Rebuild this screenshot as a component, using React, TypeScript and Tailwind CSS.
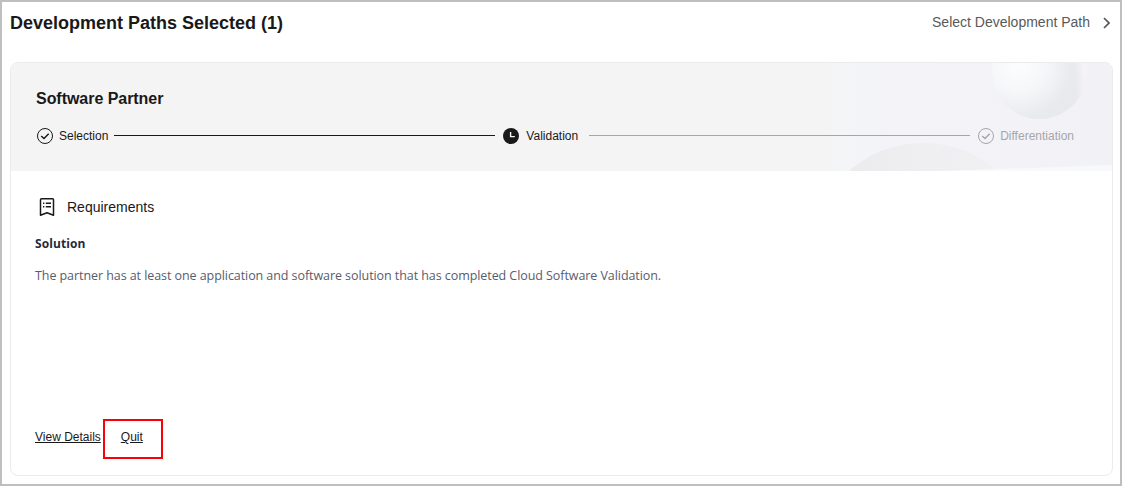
import React from 'react';

interface StepProps {
    label: string;
    status: 'done' | 'current' | 'pending';
}

const StepIcon: React.FC<{ status: StepProps['status'] }> = ({ status }) => {
    if (status === 'current') {
        return (
            <svg className="w-4 h-4 mr-px shrink-0" viewBox="0 0 16 16" fill="none">
                <circle cx="8" cy="8" r="8" fill="#191919" />
                <path d="M7.6 4v4.6h4.2" stroke="#f4f4f4" strokeWidth="1.4" />
            </svg>
        );
    }
    return (
        <svg className="w-4 h-4 shrink-0" viewBox="0 0 16 16" fill="none" stroke="currentColor" strokeWidth="1">
            <circle cx="8" cy="8" r="7.5" />
            <path d="M4.2 7.9l2.8 2.7 4.7-4.9" strokeWidth="1.4" />
        </svg>
    );
};

const Step: React.FC<StepProps> = ({ label, status }) => (
    <div className={`flex items-center gap-[6px] text-xs ${status === 'pending' ? 'text-[#a6a6a9]' : 'text-[#191919]'}`}>
        <StepIcon status={status} />
        <span className="whitespace-nowrap">{label}</span>
    </div>
);

const HeaderArt: React.FC = () => (
    <svg className="absolute right-0 top-0 w-[300px] h-[108px]" viewBox="0 0 300 108">
        <defs>
            <linearGradient id="wash" x1="0" x2="1" y1="0" y2="0">
                <stop offset="0" stopColor="#f4f4f4" />
                <stop offset="0.1" stopColor="#f4f5f7" />
                <stop offset="0.3" stopColor="#f3f3f8" />
                <stop offset="1" stopColor="#f2f1f6" />
            </linearGradient>
            <radialGradient id="ball" gradientUnits="userSpaceOnUse" cx="206" cy="2" r="66">
                <stop offset="0" stopColor="#fcfdfe" />
                <stop offset="0.4" stopColor="#f6f7f9" />
                <stop offset="0.8" stopColor="#e9eaed" />
                <stop offset="1" stopColor="#e8e9ed" />
            </radialGradient>
            <linearGradient id="rim" x1="0" x2="1" y1="0.5" y2="0.45">
                <stop offset="0.86" stopColor="#f8f5f7" stopOpacity="0" />
                <stop offset="1" stopColor="#f8f5f7" />
            </linearGradient>
            <linearGradient id="dome" x1="0" x2="1" y1="0" y2="0">
                <stop offset="0.15" stopColor="#ebebed" />
                <stop offset="0.5" stopColor="#efeff1" />
                <stop offset="0.85" stopColor="#f0f0f2" />
            </linearGradient>
        </defs>
        <rect width="300" height="108" fill="url(#wash)" />
        <circle cx="111" cy="192" r="112" fill="url(#dome)" />
        <path d="M130 108L300 102v6z" fill="#f8f9fc" />
        <circle cx="227.5" cy="8.5" r="47.5" fill="url(#ball)" />
        <circle cx="227.5" cy="8.5" r="47.5" fill="url(#rim)" />
    </svg>
);

export default function App() {
    return (
        <div className="w-[1122px] h-[486px] border-2 border-[#bfbfbf] bg-white pl-2 pr-[7px] pb-2 flex flex-col font-['Liberation_Sans',Arial,sans-serif] text-[#191919]">
            {/* Title bar */}
            <div className="h-[60px] shrink-0 pt-[7px] flex justify-between items-start">
                <h1 className="text-lg leading-7 font-bold">Development Paths Selected (1)</h1>
                <a className="flex items-center gap-[13px] pr-[3px] text-sm leading-[26px] text-[#595959]">
                    Select Development Path
                    <svg className="w-[7px] h-3 mt-[2px]" viewBox="0 0 7 12" fill="none" stroke="#555" strokeWidth="1.7">
                        <path d="M1 1l5 5-5 5" />
                    </svg>
                </a>
            </div>

            {/* Path card */}
            <div className="flex-1 flex flex-col border border-[#ebebeb] rounded-lg overflow-hidden">
                <div className="relative h-[108px] shrink-0 bg-[#f4f4f4]">
                    <HeaderArt />
                    <div className="relative pl-[25px] pr-[38px] pt-6">
                        <h2 className="text-base leading-6 font-bold tracking-[-0.04px]">Software Partner</h2>
                        <div className="mt-[17px] pl-px flex items-center">
                            <Step label="Selection" status="done" />
                            <div className="flex-1 h-px bg-[#191919] ml-[6px] mr-2 mb-[2px]" />
                            <Step label="Validation" status="current" />
                            <div className="flex-1 h-px bg-[#a6a6a9] ml-[11px] mr-2 mb-[2px]" />
                            <Step label="Differentiation" status="pending" />
                        </div>
                    </div>
                </div>

                <div className="flex-1 flex flex-col px-6 pt-[26px]">
                    <div className="flex items-center gap-3 text-sm leading-5">
                        <svg className="w-5 h-5 ml-[2px] -mr-[2px]" viewBox="0 0 20 20" fill="none" stroke="#191919" strokeWidth="1.5">
                            <path d="M3.5 18.3V2.7q0-1 1-1h11q1 0 1 1v15.6L10 15.7z" strokeLinejoin="round" />
                            <path d="M6 6.2h1.3M8.8 6.2h5.2M6 9.8h1.3M8.8 9.8h5.2" />
                        </svg>
                        Requirements
                    </div>
                    <div className="mt-[17px] text-xs leading-5 font-bold tracking-[0.1px] text-[#252b3a] font-['Open_Sans','Noto_Sans',sans-serif]">Solution</div>
                    <p className="mt-3 text-[12.5px] leading-5 tracking-[-0.07px] text-[#575d6c] font-['Open_Sans','Noto_Sans',sans-serif]">
                        The partner has at least one application and software solution that has completed Cloud Software Validation.
                    </p>
                    <div className="mt-auto mb-4 flex items-center text-xs">
                        <a className="pb-1 underline underline-offset-1">View Details</a>
                        <div className="ml-[2px] w-[60px] h-10 border-2 border-[#fb0007] flex items-center pl-4 pb-1">
                            <a className="underline underline-offset-1">Quit</a>
                        </div>
                    </div>
                </div>
            </div>
        </div>
    );
}
